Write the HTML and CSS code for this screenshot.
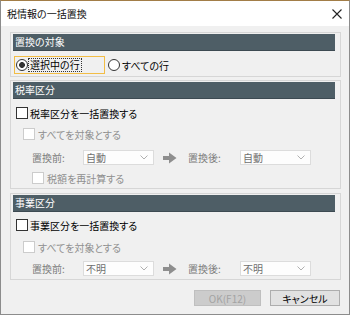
FILE: index.html
```html
<!DOCTYPE html>
<html>
  <head>
    <meta charset="UTF-8">
    <title>税情報の一括置換</title>
    <link rel="stylesheet" href="styles.css">
  </head>
  <body>
    <div class="window">
      <div class="title-bar">
        <div class="title">税情報の一括置換</div>
        <svg class="close-btn" width="10" height="10" viewBox="0 0 10 10">
          <path d="M0.5 0.5 L9.5 9.5 M9.5 0.5 L0.5 9.5" stroke="#222" stroke-width="1.1" fill="none"/>
        </svg>
      </div>

      <div class="content">
        <div class="group group-target">
          <div class="group-head">置換の対象</div>
          <div class="radio-row">
            <div class="radio focused">
              <span class="radio-dot checked"></span>
              <span class="focus-text">選択中の行</span>
            </div>
            <div class="radio">
              <span class="radio-dot"></span>
              <span class="radio-text">すべての行</span>
            </div>
          </div>
        </div>

        <div class="group group-tax">
          <div class="group-head">税率区分</div>
          <div class="check main"><span class="box"></span>税率区分を一括置換する</div>
          <div class="check sub disabled"><span class="box"></span>すべてを対象とする</div>
          <div class="replace-row">
            <span class="field-label">置換前:</span>
            <div class="combo">
              <span>自動</span>
              <svg class="chevron" width="8" height="5" viewBox="0 0 8 5"><path d="M0.5 0.5 L4 4 L7.5 0.5" stroke="#b0b0b0" fill="none"/></svg>
            </div>
            <svg class="arrow" width="14" height="12" viewBox="0 0 14 12">
              <path d="M0 4 H6 V0.5 L13.5 6 L6 11.5 V8 H0 Z" fill="#8e8e8e"/>
            </svg>
            <span class="field-label after">置換後:</span>
            <div class="combo">
              <span>自動</span>
              <svg class="chevron" width="8" height="5" viewBox="0 0 8 5"><path d="M0.5 0.5 L4 4 L7.5 0.5" stroke="#b0b0b0" fill="none"/></svg>
            </div>
          </div>
          <div class="check recalc disabled"><span class="box"></span>税額を再計算する</div>
        </div>

        <div class="group group-biz">
          <div class="group-head">事業区分</div>
          <div class="check main"><span class="box"></span>事業区分を一括置換する</div>
          <div class="check sub disabled"><span class="box"></span>すべてを対象とする</div>
          <div class="replace-row">
            <span class="field-label">置換前:</span>
            <div class="combo">
              <span>不明</span>
              <svg class="chevron" width="8" height="5" viewBox="0 0 8 5"><path d="M0.5 0.5 L4 4 L7.5 0.5" stroke="#b0b0b0" fill="none"/></svg>
            </div>
            <svg class="arrow" width="14" height="12" viewBox="0 0 14 12">
              <path d="M0 4 H6 V0.5 L13.5 6 L6 11.5 V8 H0 Z" fill="#8e8e8e"/>
            </svg>
            <span class="field-label after">置換後:</span>
            <div class="combo">
              <span>不明</span>
              <svg class="chevron" width="8" height="5" viewBox="0 0 8 5"><path d="M0.5 0.5 L4 4 L7.5 0.5" stroke="#b0b0b0" fill="none"/></svg>
            </div>
          </div>
        </div>

        <div class="buttons">
          <button class="btn ok" disabled>OK(F12)</button>
          <button class="btn cancel">キャンセル</button>
        </div>
      </div>
    </div>
  </body>
</html>
```

FILE: styles.css
```css
body {
  margin: 0;
  padding: 0;
  background-color: #ffffff;
  font-family: "Noto Sans CJK JP", "Noto Sans", sans-serif;
  font-size: 10px;
  font-feature-settings: "palt";
  color: #000000;
}

.window {
  width: 348px;
  height: 313px;
  border: 1px solid #8c8c8c;
  border-top-color: #a27d47;
  background-color: #f0f0f0;
}

/* title bar */
.title-bar {
  height: 25px;
  background-color: #ffffff;
  display: flex;
  align-items: center;
  justify-content: space-between;
  padding: 0 7px 0 6px;
}

.title {
  font-size: 10px;
  color: #111;
}

.close-btn {
  display: block;
  margin-top: 1px;
}

.content {
  padding-top: 6px;
}

/* group boxes */
.group {
  margin: 0 8px 0 9px;
  border: 1px solid #d6d6d6;
  padding: 1px 2px 2px 2px;
}

.group-tax {
  margin-top: 3px;
}

.group-biz {
  margin-top: 4px;
}

.group-head {
  height: 17px;
  line-height: 16px;
  margin-right: 3px;
  padding-left: 2px;
  background-color: #4e5e66;
  border-bottom: 1px solid #3d4a52;
  box-sizing: border-box;
  color: #ffffff;
}

/* radios */
.radio-row {
  display: flex;
  height: 18px;
  margin-top: 5px;
  padding-left: 1px;
}

.radio {
  display: flex;
  align-items: center;
  height: 18px;
}

.radio.focused {
  width: 91px;
  box-sizing: border-box;
  border: 1px solid #f2bd45;
  padding-left: 1px;
}

.radio + .radio {
  margin-left: 3px;
}

.radio-dot {
  width: 12px;
  height: 12px;
  box-sizing: border-box;
  border: 1px solid #333;
  border-radius: 50%;
  background: #ffffff;
}

.radio-dot.checked {
  background: radial-gradient(circle, #333 0 2.6px, #ffffff 3.2px);
}

.focus-text {
  margin-left: 1px;
  padding: 0 1px;
  line-height: 12px;
  outline: 1px dotted #333;
}

.radio-text {
  margin-left: 2px;
}

/* checkboxes */
.check {
  display: flex;
  align-items: center;
  height: 18px;
}

.check .box {
  width: 12px;
  height: 12px;
  box-sizing: border-box;
  border: 1px solid #333;
  background: #ffffff;
  margin-right: 2px;
}

.check.main {
  margin-top: 5px;
  padding-left: 3px;
}

.check.sub {
  margin-top: 3px;
  padding-left: 10px;
}

.check.disabled {
  color: #8f8f8f;
}

.check.disabled .box {
  border-color: #cccccc;
  margin-right: 3px;
}

.check.recalc {
  margin-top: 5px;
  height: 16px;
  padding-left: 19px;
}

.group-biz .check.main {
  margin-top: 4px;
}

.group-biz .check.sub {
  margin-top: 4px;
}

/* replace rows */
.replace-row {
  display: flex;
  align-items: center;
  height: 15px;
  margin-top: 7px;
  padding-left: 19px;
}

.group-biz .replace-row {
  margin-top: 5px;
  margin-bottom: 1px;
}

.field-label {
  width: 51px;
  color: #7c7c7c;
}

.field-label.after {
  width: 52px;
  margin-left: 11px;
}

.combo {
  width: 71px;
  height: 15px;
  box-sizing: border-box;
  border: 1px solid #dcdcdc;
  background: #fdfdfd;
  display: flex;
  align-items: center;
  justify-content: space-between;
  padding: 0 5px 0 2px;
  color: #6f6f6f;
}

.chevron {
  display: block;
}

.arrow {
  display: block;
  margin-left: 9px;
}

/* buttons */
.buttons {
  display: flex;
  justify-content: flex-end;
  gap: 9px;
  margin-top: 10px;
  padding-right: 9px;
}

.btn {
  height: 16px;
  padding: 0;
  font-family: "Noto Sans CJK JP", "Noto Sans", sans-serif;
  font-size: 10px;
  font-feature-settings: "palt";
  border: 1px solid #adadad;
  background-color: #e1e1e1;
  color: #000;
}

.btn.ok {
  width: 67px;
  background-color: #cccccc;
  border-color: #bfbfbf;
  color: #a3a3a3;
}

.btn.cancel {
  width: 70px;
}
```
